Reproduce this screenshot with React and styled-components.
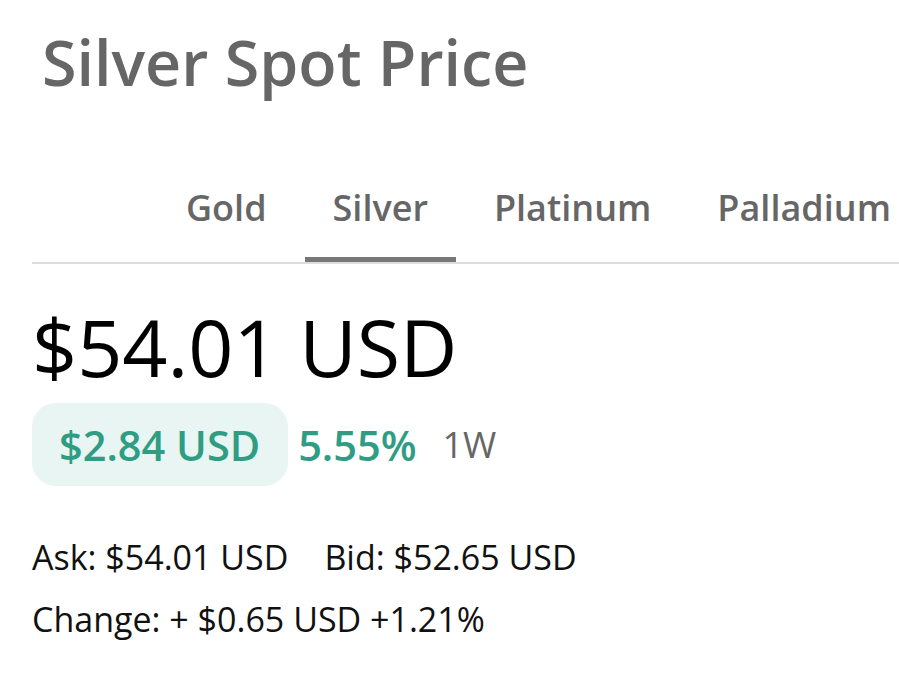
import React from 'react';
import styled, { createGlobalStyle } from 'styled-components';

const GlobalStyle = createGlobalStyle`
  html, body {
    margin: 0;
    padding: 0;
    background: #fff;
    overflow: hidden;
  }
  body {
    font-family: "Open Sans", "Noto Sans", sans-serif;
  }
`;

const Page = styled.div`
  width: 899px;
  height: 698px;
  padding-left: 32px;
  box-sizing: border-box;
  overflow: hidden;
`;

const Title = styled.h1`
  margin: 0;
  padding: 19px 0 0 10px;
  font-size: 62.8px;
  font-weight: 600;
  line-height: 86px;
  color: #666;
`;

const TabList = styled.div`
  display: flex;
  gap: 10px;
  margin-top: 77px;
  padding-left: 126px;
  border-bottom: 2px solid #ddd;
  white-space: nowrap;
`;

const Tab = styled.div`
  flex: none;
  box-sizing: border-box;
  height: 80px;
  padding: 0 28px;
  font-size: 36px;
  font-weight: 600;
  line-height: 51px;
  color: #666;
  border-bottom: 5px solid ${p => (p.$active ? '#777' : 'transparent')};
`;

const Price = styled.div`
  margin-top: 33px;
  font-size: 79px;
  font-weight: 500;
  line-height: 100px;
  color: #000;
`;

const ChangeRow = styled.div`
  display: flex;
  align-items: center;
  gap: 12px;
  margin-top: 6px;
`;

const Badge = styled.div`
  box-sizing: border-box;
  height: 83px;
  padding: 0 28px 0 27px;
  display: flex;
  align-items: center;
  border-radius: 24px;
  background: #e8f5f2;
  color: #2f9d83;
  font-size: 41.5px;
  font-weight: 600;
`;

const Percent = styled.span`
  margin-left: -2px;
  color: #2f9d83;
  font-size: 41.5px;
  font-weight: 600;
`;

const Period = styled.span`
  margin-left: 14px;
  color: #666;
  font-size: 36px;
  font-weight: 400;
`;

const Details = styled.div`
  margin-top: 40px;
  font-size: 34px;
  line-height: 62px;
  color: #111;
`;

const DetailRow = styled.div`
  display: flex;
  gap: 36px;
`;

export default function App() {
  return (
    <>
      <GlobalStyle />
      <Page>
        <Title>Silver Spot Price</Title>
        <TabList>
          <Tab>Gold</Tab>
          <Tab $active>Silver</Tab>
          <Tab>Platinum</Tab>
          <Tab>Palladium</Tab>
        </TabList>
        <Price>$54.01 USD</Price>
        <ChangeRow>
          <Badge>$2.84 USD</Badge>
          <Percent>5.55%</Percent>
          <Period>1W</Period>
        </ChangeRow>
        <Details>
          <DetailRow>
            <span>Ask: $54.01 USD</span>
            <span>Bid: $52.65 USD</span>
          </DetailRow>
          <DetailRow>
            <span>Change: + $0.65 USD +1.21%</span>
          </DetailRow>
        </Details>
      </Page>
    </>
  );
}
